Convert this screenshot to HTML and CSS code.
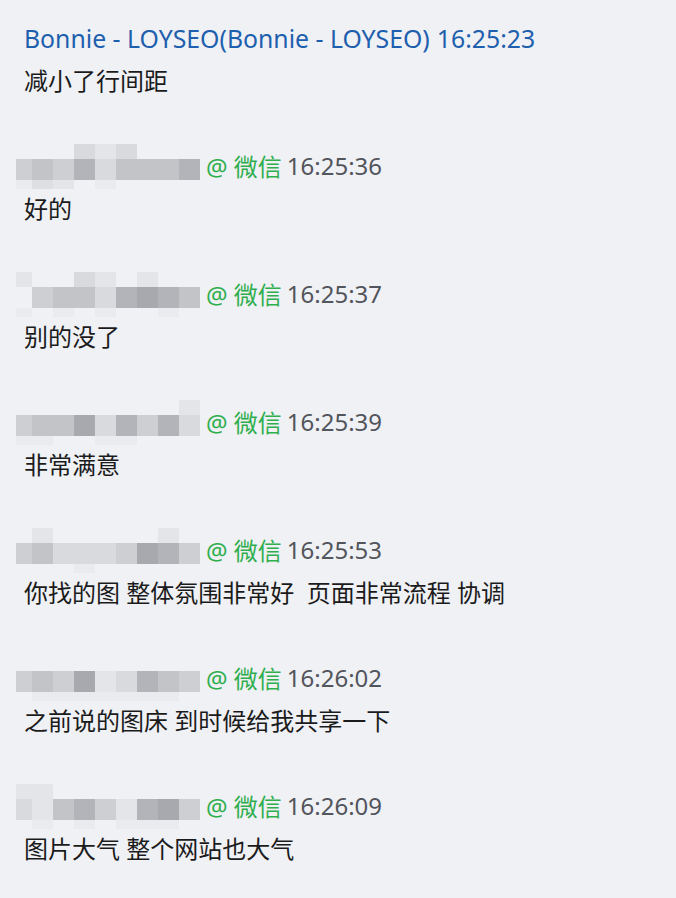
FILE: index.html
```html
<!DOCTYPE html>
<html lang="zh-CN">
<head>
    <meta charset="UTF-8">
    <meta name="viewport" content="width=device-width, initial-scale=1.0">
    <title>聊天记录</title>
    <link rel="stylesheet" href="styles.css">
</head>
<body>
    <div class="chat">
        <div class="msg">
            <div class="head">
                <span class="name">Bonnie - LOYSEO(Bonnie - LOYSEO)</span>
                <span class="time self">16:25:23</span>
            </div>
            <div class="text">减小了行间距</div>
        </div>

        <div class="msg">
            <div class="head">
                <span class="mosaic" data-rows="000212000|343524445|132010000"></span>
                <span class="src">@ 微信</span>
                <span class="time">16:25:36</span>
            </div>
            <div class="text">好的</div>
        </div>

        <div class="msg">
            <div class="head">
                <span class="mosaic" data-rows="100210100|034425654|101010010"></span>
                <span class="src">@ 微信</span>
                <span class="time">16:25:37</span>
            </div>
            <div class="text">别的没了</div>
        </div>

        <div class="msg">
            <div class="head">
                <span class="mosaic" data-rows="000000001|344625352|110011000"></span>
                <span class="src">@ 微信</span>
                <span class="time">16:25:39</span>
            </div>
            <div class="text">非常满意</div>
        </div>

        <div class="msg">
            <div class="head">
                <span class="mosaic" data-rows="010000010|342223653|000100000"></span>
                <span class="src">@ 微信</span>
                <span class="time">16:25:53</span>
            </div>
            <div class="text">你找的图 整体氛围非常好&nbsp; 页面非常流程 协调</div>
        </div>

        <div class="msg">
            <div class="head">
                <span class="mosaic" data-rows="000000000|343612543|011111110"></span>
                <span class="src">@ 微信</span>
                <span class="time">16:26:02</span>
            </div>
            <div class="text">之前说的图床 到时候给我共享一下</div>
        </div>

        <div class="msg">
            <div class="head">
                <span class="mosaic" data-rows="110000000|214531563|010101110"></span>
                <span class="src">@ 微信</span>
                <span class="time">16:26:09</span>
            </div>
            <div class="text">图片大气 整个网站也大气</div>
        </div>
    </div>

    <script>
        // Build the pixelated name blocks from their row patterns
        document.querySelectorAll('.mosaic').forEach(box => {
            box.dataset.rows.split('|').forEach((row, r) => {
                row.split('').forEach(level => {
                    const cell = document.createElement('i');
                    cell.className = 'r' + r + ' m' + level;
                    box.appendChild(cell);
                });
            });
        });
    </script>
</body>
</html>
```

FILE: styles.css
```css
body {
    margin: 0;
    background-color: #f0f1f5;
    font-family: "Noto Sans", "Noto Sans CJK SC", sans-serif;
    font-size: 24px;
    color: #1b1b1b;
}
.chat {
    padding: 16px 24px 0 24px;
}
.msg {
    margin-bottom: 42px;
}
.head {
    display: flex;
    align-items: center;
    height: 43px;
    white-space: nowrap;
    font-size: 24.8px;
}
.name {
    color: #1e5fae;
    margin-right: 7px;
}
.time {
    color: #52555c;
    font-size: 24px;
}
.time.self {
    color: #1e5fae;
    font-size: 24.8px;
}
.src {
    color: #2fae4e;
    margin: 0 5px 0 6px;
    font-size: 24px;
}
.text {
    height: 43px;
    line-height: 43px;
}
.mosaic {
    display: grid;
    grid-template-columns: 16px repeat(8, 21px);
    grid-template-rows: 15px 21px 9px;
    margin: 2px 0 0 -8px;
}
.mosaic i {
    display: block;
}
.mosaic .r2 {
    opacity: 0.55;
}
.m0 { background-color: transparent; }
.m1 { background-color: #e4e5e9; }
.m2 { background-color: #d9dade; }
.m3 { background-color: #cecfd3; }
.m4 { background-color: #c3c4c8; }
.m5 { background-color: #b3b4b9; }
.m6 { background-color: #a8a9af; }
```
